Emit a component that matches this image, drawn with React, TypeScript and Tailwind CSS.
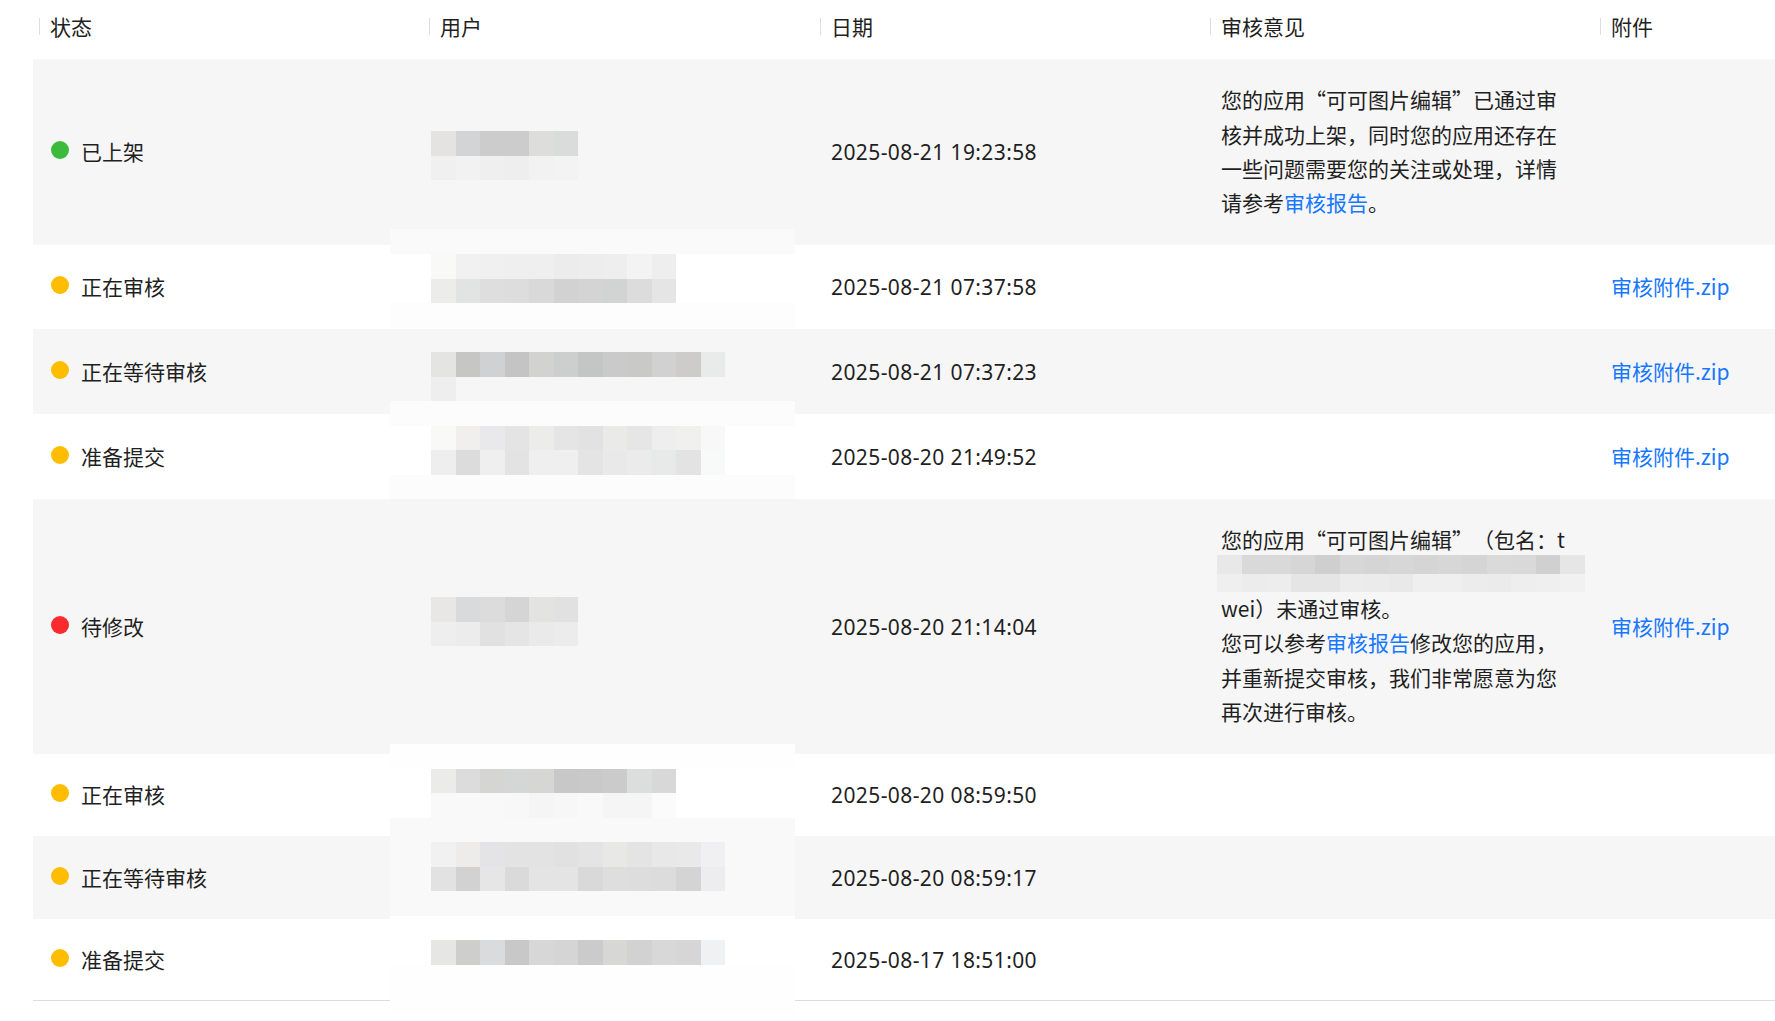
import React from "react";

const STEP = 24.5;

function MosaicRow({ x0, y, h, colors }: { x0: number; y: number; h: number; colors: string[] }) {
  return (
    <>
      {colors.map((c, i) => (
        <rect key={i} x={x0 + i * STEP - 390} y={y} width={STEP + 0.3} height={h} fill={c} />
      ))}
    </>
  );
}

function Band({ y, h, c }: { y: number; h: number; c: string }) {
  return <rect x={0} y={y} width={405} height={h} fill={c} />;
}

function UserMosaic() {
  return (
    <svg
      className="pointer-events-none absolute left-[390px] top-0"
      width={405}
      height={1021}
      viewBox="0 0 405 1021"
      shapeRendering="crispEdges"
    >
      {/* row 1 */}
      <MosaicRow x0={431} y={131} h={24.5} colors={["#e4e3e1", "#d3d4d6", "#cbcccb", "#cbcccb", "#dddddb", "#dadcdb"]} />
      <MosaicRow x0={431} y={155.5} h={24.5} colors={["#f0f0f0", "#f2f2f2", "#efefef", "#eeeeee", "#f2f2f2", "#f3f3f3"]} />
      <Band y={229} h={25} c="#fafafa" />
      {/* row 2 */}
      <Band y={254} h={49} c="#ffffff" />
      <MosaicRow x0={431} y={254} h={24.5} colors={["#f9f9f8", "#f1f1f1", "#f0f0f0", "#efefef", "#efefef", "#ececec", "#ededed", "#eeeeee", "#f3f3f3", "#eeeeee"]} />
      <MosaicRow x0={431} y={278.5} h={24.5} colors={["#ececea", "#e2e4e3", "#dedede", "#dddddd", "#d9d9d9", "#d2d2d2", "#d4d4d4", "#d2d4d3", "#dcdcdc", "#e5e5e5"]} />
      <Band y={303} h={25} c="#fdfdfd" />
      {/* row 3 */}
      <MosaicRow x0={431} y={352} h={24.5} colors={["#e4e4e2", "#c6c6c4", "#d0d1d3", "#c4c4c4", "#d2d2d0", "#cdcfce", "#c4c6c5", "#cacaca", "#c9c9c7", "#d1d1d1", "#cdcccb", "#e9ebea"]} />
      <MosaicRow x0={431} y={376.5} h={24.5} colors={["#eeeeee"]} />
      <Band y={401} h={24.5} c="#fcfcfc" />
      {/* row 4 */}
      <MosaicRow x0={431} y={425.5} h={24.5} colors={["#f9f9f7", "#f0efed", "#e9e9eb", "#e4e4e4", "#ececea", "#e5e5e5", "#e2e2e2", "#eaeae8", "#e6e6e6", "#eeeeee", "#f0f0ee", "#f8f8f8"]} />
      <MosaicRow x0={431} y={450} h={24.5} colors={["#eeeeee", "#dcdcdc", "#efefef", "#e3e3e3", "#efefef", "#efefef", "#e4e4e4", "#e9e9e9", "#ebebeb", "#e8eae9", "#e3e3e3", "#f8f9f9"]} />
      <Band y={474.5} h={24.5} c="#fcfcfc" />
      {/* row 5 */}
      <MosaicRow x0={431} y={597} h={24.5} colors={["#e8e7e5", "#d9dadc", "#dcdcdc", "#d5d5d5", "#e3e3e1", "#e1e1e1"]} />
      <MosaicRow x0={431} y={621.5} h={24.5} colors={["#eeeeee", "#ececec", "#e1e1e1", "#e5e5e5", "#eaeaea", "#ececec"]} />
      <Band y={744} h={24.5} c="#fefefe" />
      {/* row 6 */}
      <MosaicRow x0={431} y={768.5} h={24.5} colors={["#ebebe9", "#dcdcdc", "#d5d5d3", "#d5d7d6", "#d6d6d4", "#c8c8c8", "#c9c9c9", "#cbcbcb", "#dcdedd", "#d8d8d8"]} />
      <MosaicRow x0={431} y={793} h={24.5} colors={["#f9f9f9", "#f9f9f9", "#f9f9f9", "#f8f8f8", "#f5f5f5", "#f7f7f7", "#f9f9f9", "#f5f5f5", "#f5f5f5", "#fbfbfb"]} />
      {/* row 7 */}
      <Band y={817.5} h={98} c="#f9f9f9" />
      <MosaicRow x0={431} y={842} h={24.5} colors={["#f1f1f1", "#edecea", "#e4e4e6", "#e3e3e3", "#e3e3e3", "#e1e1e1", "#e4e4e4", "#e8e8e6", "#e4e4e4", "#e8e8e8", "#e9e9e9", "#f0f0f2"]} />
      <MosaicRow x0={431} y={866.5} h={24.5} colors={["#e2e2e2", "#d2d2d2", "#e6e6e6", "#dadada", "#e4e4e4", "#e4e4e4", "#d9d9d9", "#dedede", "#dddddd", "#dcdcdc", "#d4d4d4", "#ededef"]} />
      {/* row 8 */}
      <Band y={915.5} h={24.5} c="#ffffff" />
      <MosaicRow x0={431} y={940} h={24.5} colors={["#e6e6e4", "#cececc", "#dadbdd", "#c8c8c8", "#d7d7d7", "#d5d5d5", "#cbcbcb", "#d7d7d5", "#d2d2d2", "#d8d8d8", "#d6d6d6", "#f0f1f3"]} />
      <Band y={964.5} h={49} c="#fefefe" />
    </svg>
  );
}

function ReviewMosaic() {
  const top = ["#e8e8e8", "#d9d9d9", "#d9d9d9", "#d6d6d6", "#cfcfcf", "#d7d7d7", "#d5d5d5", "#d7d7d7", "#d5d5d5", "#d7d7d7", "#d5d5d5", "#dadada", "#d9d9d9", "#d0d0d0", "#e6e6e6"];
  const bottom = ["#efefef", "#ececec", "#ededed", "#e5e5e5", "#e5e5e5", "#ececec", "#ebebeb", "#e9e9e9", "#efefef", "#efefef", "#ececec", "#ebebeb", "#eeeeee", "#efefef", "#f1f1f1"];
  const w = 368 / 15;
  return (
    <svg width={368} height={37} viewBox="0 0 368 37" shapeRendering="crispEdges" className="ml-[-4px] shrink-0">
      {top.map((c, i) => (
        <rect key={"t" + i} x={i * w} y={0} width={w + 0.3} height={18.5} fill={c} />
      ))}
      {bottom.map((c, i) => (
        <rect key={"b" + i} x={i * w} y={18.5} width={w + 0.3} height={18.5} fill={c} />
      ))}
    </svg>
  );
}

const Link = ({ children }: { children: React.ReactNode }) => (
  <span className="cursor-pointer text-[#1677ff]">{children}</span>
);

type RowData = {
  status: string;
  dot: string;
  date: string;
  height: string;
  bg: string;
  review?: React.ReactNode;
  file?: boolean;
};

const rows: RowData[] = [
  {
    status: "已上架",
    dot: "bg-[#3cba3c]",
    date: "2025-08-21 19:23:58",
    height: "h-[186px]",
    bg: "bg-[#f6f6f6]",
    review: (
      <div className="whitespace-nowrap leading-[34.4px]">
        <div>您的应用“可可图片编辑”已通过审</div>
        <div>核并成功上架，同时您的应用还存在</div>
        <div>一些问题需要您的关注或处理，详情</div>
        <div>
          请参考<Link>审核报告</Link>。
        </div>
      </div>
    ),
  },
  { status: "正在审核", dot: "bg-[#ffbd00]", date: "2025-08-21 07:37:58", height: "h-[84px]", bg: "bg-white", file: true },
  { status: "正在等待审核", dot: "bg-[#ffbd00]", date: "2025-08-21 07:37:23", height: "h-[85px]", bg: "bg-[#f6f6f6]", file: true },
  { status: "准备提交", dot: "bg-[#ffbd00]", date: "2025-08-20 21:49:52", height: "h-[85px]", bg: "bg-white", file: true },
  {
    status: "待修改",
    dot: "bg-[#fa2b2e]",
    date: "2025-08-20 21:14:04",
    height: "h-[255px]",
    bg: "bg-[#f6f6f6]",
    file: true,
    review: (
      <div className="whitespace-nowrap leading-[34.4px]">
        <div>您的应用“可可图片编辑”（包名：t</div>
        <div className="flex h-[34.4px] items-center">
          <ReviewMosaic />
        </div>
        <div>wei）未通过审核。</div>
        <div>
          您可以参考<Link>审核报告</Link>修改您的应用，
        </div>
        <div>并重新提交审核，我们非常愿意为您</div>
        <div>再次进行审核。</div>
      </div>
    ),
  },
  { status: "正在审核", dot: "bg-[#ffbd00]", date: "2025-08-20 08:59:50", height: "h-[82px]", bg: "bg-white" },
  { status: "正在等待审核", dot: "bg-[#ffbd00]", date: "2025-08-20 08:59:17", height: "h-[83px]", bg: "bg-[#f6f6f6]" },
  { status: "准备提交", dot: "bg-[#ffbd00]", date: "2025-08-17 18:51:00", height: "h-[81px]", bg: "bg-white" },
];

function HeaderCell({ label, width }: { label: string; width: string }) {
  return (
    <div className={`flex items-center ${width}`}>
      <span className="mt-[1px] h-[17px] w-px bg-[#dedede]" />
      <span className="ml-[10px]">{label}</span>
    </div>
  );
}

export default function App() {
  return (
    <div className="relative h-[1021px] w-[1775px] overflow-hidden bg-white font-['Noto_Sans_CJK_SC','Noto_Sans',sans-serif] text-[21px] text-[#1f1f1f] [text-spacing-trim:space-all]">
      <div className="ml-[33px] w-[1742px]">
        {/* header */}
        <div className="flex h-[59px] items-center pb-[7px] leading-[34px]">
          <div className="w-[6px] shrink-0" />
          <HeaderCell label="状态" width="w-[390px]" />
          <HeaderCell label="用户" width="w-[391px]" />
          <HeaderCell label="日期" width="w-[390px]" />
          <HeaderCell label="审核意见" width="w-[390px]" />
          <HeaderCell label="附件" width="flex-1" />
        </div>
        {/* body */}
        <div className="border-b border-[#dddddd]">
          {rows.map((r, i) => (
            <div key={i} className={`flex items-center pb-[2px] ${r.height} ${r.bg} leading-[34px]`}>
              <div className="flex w-[396px] items-center pl-[18px]">
                <span className={`mb-[2px] h-[18px] w-[18px] shrink-0 rounded-full ${r.dot}`} />
                <span className="ml-[12px]">{r.status}</span>
              </div>
              <div className="w-[391px]" />
              <div className="w-[390px] pl-[11px] pt-[2px] font-['Noto_Sans',sans-serif] tracking-[0.4px]">{r.date}</div>
              <div className="w-[390px] pl-[11px]">{r.review}</div>
              <div className="flex-1 pl-[11px]">{r.file ? <Link>审核附件.zip</Link> : null}</div>
            </div>
          ))}
        </div>
      </div>
      <UserMosaic />
    </div>
  );
}
